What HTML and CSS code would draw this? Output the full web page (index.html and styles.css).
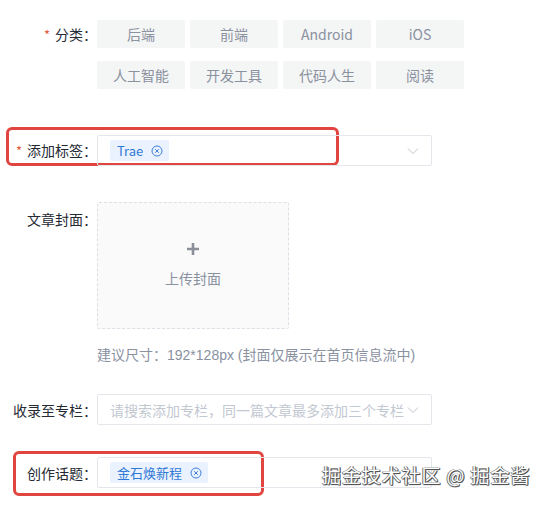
FILE: index.html
```html
<!DOCTYPE html>
<html lang="zh">
<head>
<meta charset="utf-8">
<link rel="stylesheet" href="styles.css">
</head>
<body>
<div class="form">
  <div class="row row-cat">
    <div class="label"><span class="req">*</span>分类：</div>
    <div class="cats">
      <span class="cat">后端</span>
      <span class="cat">前端</span>
      <span class="cat">Android</span>
      <span class="cat">iOS</span>
      <span class="cat">人工智能</span>
      <span class="cat">开发工具</span>
      <span class="cat">代码人生</span>
      <span class="cat">阅读</span>
    </div>
  </div>

  <div class="row row-tag">
    <div class="highlight hl-tag"></div>
    <div class="label"><span class="req">*</span>添加标签：</div>
    <div class="select">
      <span class="tag">Trae<svg class="x" viewBox="0 0 12 12" width="12" height="12"><circle cx="6" cy="6" r="5" fill="none" stroke="currentColor" stroke-width="1"/><path d="M4.2 4.2L7.8 7.8M7.8 4.2L4.2 7.8" stroke="currentColor" stroke-width="1"/></svg></span>
      <svg class="chev" viewBox="0 0 12 8" width="12" height="8"><path d="M1 1.5L6 6.5L11 1.5" fill="none" stroke="#c0c4cc" stroke-width="1"/></svg>
    </div>
  </div>

  <div class="row row-cover">
    <div class="label label-top">文章封面：</div>
    <div class="cover-col">
      <div class="upload">
        <svg class="plus" viewBox="0 0 14 14" width="14" height="14"><path d="M7 1V13M1 7H13" stroke="#8a8f99" stroke-width="2.6"/></svg>
        <span class="upload-text">上传封面</span>
      </div>
      <div class="hint">建议尺寸：192*128px (封面仅展示在首页信息流中)</div>
    </div>
  </div>

  <div class="row row-col">
    <div class="label">收录至专栏：</div>
    <div class="select">
      <span class="placeholder">请搜索添加专栏，同一篇文章最多添加三个专栏</span>
      <svg class="chev" viewBox="0 0 12 8" width="12" height="8"><path d="M1 1.5L6 6.5L11 1.5" fill="none" stroke="#c0c4cc" stroke-width="1"/></svg>
    </div>
  </div>

  <div class="row row-topic">
    <div class="highlight hl-topic"></div>
    <div class="label">创作话题：</div>
    <div class="select">
      <span class="tag">金石焕新程<svg class="x" viewBox="0 0 12 12" width="12" height="12"><circle cx="6" cy="6" r="5" fill="none" stroke="currentColor" stroke-width="1"/><path d="M4.2 4.2L7.8 7.8M7.8 4.2L4.2 7.8" stroke="currentColor" stroke-width="1"/></svg></span>
    </div>
    <div class="watermark">掘金技术社区 @ 掘金酱</div>
  </div>
</div>
</body>
</html>
```

FILE: styles.css
```css
html, body {
  margin: 0;
  padding: 0;
  background: #fff;
}
body {
  font-family: "Noto Sans CJK SC", "Noto Sans", sans-serif;
  font-size: 14px;
  color: #333;
  width: 546px;
  height: 508px;
  overflow: hidden;
}
.form {
  padding-top: 20px;
  display: flex;
  flex-direction: column;
}
.row {
  display: flex;
  align-items: center;
  position: relative;
}
.label {
  width: 97px;
  flex: none;
  text-align: right;
  font-size: 14px;
  color: #252933;
  line-height: 20px;
  white-space: nowrap;
}
.label-top {
  align-self: flex-start;
  margin-top: 7px;
}
.req {
  color: #e5573e;
  margin-right: 5px;
  font-size: 13px;
}
.row-cat {
  align-items: flex-start;
}
.row-cat .label {
  margin-top: 4px;
}
.cats {
  width: 370px;
  display: grid;
  grid-template-columns: repeat(4, 88px);
  column-gap: 5px;
  row-gap: 13px;
}
.cat {
  height: 28px;
  line-height: 28px;
  background: #f4f5f5;
  color: #8a919f;
  text-align: center;
  font-size: 14px;
  border-radius: 2px;
}
.select {
  height: 29px;
  border: 1px solid #e4e6eb;
  border-radius: 2px;
  display: flex;
  align-items: center;
  padding: 0 12px;
  box-sizing: content-box;
  position: relative;
  width: 309px;
}
.chev {
  position: absolute;
  right: 12px;
  top: 11px;
}
.tag {
  display: inline-flex;
  align-items: center;
  height: 21px;
  padding: 0 6px 0 7px;
  background: #eaf2ff;
  color: #2f78d4;
  font-size: 13px;
  border-radius: 2px;
  gap: 8px;
}
.tag .x {
  color: #3f7fd6;
}
.row-tag {
  margin-top: 46px;
}
.highlight {
  position: absolute;
  border: 3px solid #e0453f;
  border-radius: 6px;
  box-sizing: border-box;
  pointer-events: none;
}
.hl-tag {
  left: 6px;
  top: -8px;
  width: 333px;
  height: 39px;
}
.row-cover {
  margin-top: 36px;
  align-items: flex-start;
}
.cover-col {
  display: flex;
  flex-direction: column;
}
.upload {
  width: 190px;
  height: 125px;
  border: 1px dashed #dcdfe6;
  background: #fafafa;
  display: flex;
  flex-direction: column;
  align-items: center;
  justify-content: center;
  gap: 13px;
  border-radius: 2px;
}
.plus {
  margin-top: -2px;
}
.upload-text {
  color: #8a919f;
  font-size: 14px;
  line-height: 18px;
}
.hint {
  margin-top: 16px;
  color: #8a919f;
  font-family: "Liberation Sans", "Noto Sans CJK SC", sans-serif;
  font-size: 14px;
  line-height: 20px;
  white-space: nowrap;
}
.row-col {
  margin-top: 29px;
}
.placeholder {
  color: #c2c8d1;
  font-size: 14px;
  white-space: nowrap;
}
.row-topic {
  margin-top: 32px;
}
.hl-topic {
  left: 13px;
  top: -6px;
  width: 251px;
  height: 45px;
}
.watermark {
  position: absolute;
  left: 322px;
  top: 4px;
  font-size: 19px;
  color: #fff;
  white-space: nowrap;
  text-shadow: 1px 1px 0 #555, -1px 0 0 #777, 0 1px 1px #444, 1px 0 0 #666;
  letter-spacing: 0.9px;
}
```
